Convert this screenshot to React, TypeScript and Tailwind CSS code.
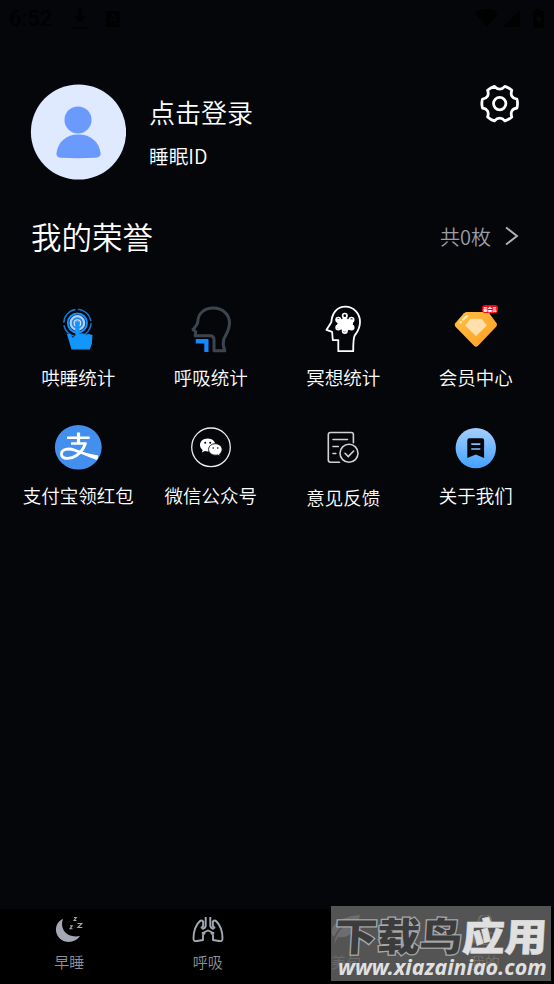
import type { ReactNode } from 'react';

interface MenuItem {
	label: string;
	icon: ReactNode;
	lower?: boolean;
}

function StatusBar() {
	return (
		<div className="flex h-9 items-center justify-between pl-[9px] pr-[9px] pt-[2px] text-[#010102]">
			<div className="flex items-center">
				<span className="w-[43px] font-['Roboto',sans-serif] text-[22px] font-medium leading-9">6:52</span>
				<svg width="16" height="22" viewBox="0 0 16 22" className="ml-[20px]" fill="currentColor">
					<path d="M6 1h4v7h4l-6 6-6-6h4zM1 19h14v2H1z" />
				</svg>
				<svg width="14" height="16" viewBox="0 0 14 16" className="ml-[18px]">
					<path d="M0 0h14v16H0z" fill="currentColor" />
					<path d="M4 11l3-8 3 8M5 9h4M9 13h3" stroke="#07080c" fill="none" />
				</svg>
			</div>
			<svg width="70" height="20" viewBox="0 0 70 20" fill="currentColor">
				<path d="M0 4Q12-4 23 4L12 18zM28 18L45 1v17zM58 2h3V0h5v2h3v17H58z" />
				<path d="M64 5l-3 6h2v4l4-6h-3z" fill="#07080c" />
			</svg>
		</div>
	);
}

function Avatar() {
	return (
		<svg width="96" height="96" viewBox="0 0 96 96">
			<circle cx="48.500" cy="48" r="47.600" fill="#dfe9ff" />
			<circle cx="48" cy="35.900" r="13.500" fill="#6b9aff" />
			<path
				d="M48.300 50.500C36 50.500 28 58 26.500 69c-.4 3 1 4.400 4 4.800Q48.300 74.700 66 73.800c3-.4 5-2 4.600-4.800C69 58 61 50.500 48.300 50.500z"
				fill="#6b9aff"
			/>
		</svg>
	);
}

function GearIcon() {
	return (
		<svg width="40" height="40" viewBox="0 0 40 40" fill="none" stroke="#fff" strokeWidth="2.800" strokeLinejoin="round">
			<path d="M14.500 2.300Q10.500 3.600 7.600 6.300C9.300 11.200 7.300 14.500 2.500 15.200Q1.200 19.500 2.500 24C7.300 24.700 9.300 28 7.600 32.900Q10.500 35.600 14.500 36.900C17.700 33.200 21.700 33.200 24.900 36.900Q28.900 35.600 31.800 32.900C30.100 28 32.100 24.700 36.900 24Q38.200 19.500 36.900 15.200C32.100 14.500 30.100 11.200 31.800 6.300Q28.900 3.600 24.900 2.300C21.700 6 17.700 6 14.500 2.300z" />
			<circle cx="19.700" cy="19.600" r="6.200" />
		</svg>
	);
}

function TouchIcon() {
	return (
		<svg width="48" height="48" viewBox="0 0 48 48" fill="none">
			<circle cx="23.400" cy="18" r="13.600" stroke="#1277cf" strokeWidth="1.400" strokeDasharray="19 2.360" />
			<circle cx="23.400" cy="18" r="9.600" fill="#0a3a6c" stroke="#1890ff" strokeWidth="1.900" />
			<circle cx="23.400" cy="18" r="6.800" fill="#2f83d8" stroke="#a9d2ff" strokeWidth="2.200" />
			<circle cx="23.400" cy="18" r="3.300" fill="#4c9cee" stroke="#d4e8ff" strokeWidth="1.100" />
			<path
				d="M21.300 18.500a2.200 2.200 0 0 1 4.200 0v10.200l3.300-.5 3 1.200 3-.3 3.700.8-.7 9-2 5.600H17.500l-1.600-5.400-3-10.100 3-.2 3 4 2.400-2z"
				fill="#1296fb"
			/>
		</svg>
	);
}

function BreathHeadIcon() {
	return (
		<svg width="48" height="48" viewBox="0 0 48 48" fill="none">
			<path
				d="M8.200 30.700h14.800Q27 30.700 27 35v10.700h10.800Q35.300 40 36.700 34.500C37.700 31 42.500 26 42.500 18 42.500 9 35 3 26.500 3 17 3 11.200 8.500 10.800 16.500 10.600 20 8 22 6 24.500l2.700 2.200z"
				stroke="#3c454f"
				strokeWidth="3"
				strokeLinejoin="round"
			/>
			<path d="M8.800 33.900h11.500q1.200 0 1.200 1.200v12h-4.200v-8.700H8.800z" fill="#1688ff" />
		</svg>
	);
}

function MindIcon() {
	return (
		<svg width="48" height="48" viewBox="0 0 48 48" fill="none" stroke="#fff">
			<g transform="translate(1.300 -.3)">
				<path
					d="M18 46.500V35.500h-5.500l-.7-8.400-5.700-1.900 4.900-7.700C11.700 8.500 16.500 2 25 2c8.400 0 14.700 6.700 14.700 15.300 0 7-2.500 9.500-5.300 13.500-1.200 2-1.500 4-1.500 15.700z"
					strokeWidth="1.800"
					strokeLinejoin="round"
				/>
				<path d="M24.500 13l3.500 2 5 .2-1 4.300 1.500 4.500-5 .8-4 2-3.500-2.500-4.500-1.100 1.200-4.500-1.700-4 5 .3z" fill="#fff" />
				<g strokeWidth="1.700">
					<circle cx="24.500" cy="11" r="2.200" />
					<circle cx="31.200" cy="15" r="2.200" />
					<circle cx="31.200" cy="22.800" r="2.200" />
					<circle cx="24.500" cy="26.300" r="2.200" />
					<circle cx="18" cy="22.800" r="2.200" />
					<circle cx="18" cy="15" r="2.200" />
				</g>
			</g>
		</svg>
	);
}

function DiamondIcon() {
	return (
		<span className="relative block h-12 w-12">
			<svg width="48" height="48" viewBox="0 0 48 48">
				<defs>
					<linearGradient id="gold" x1="0" y1="0" x2="1" y2="1">
						<stop offset="0" stopColor="#ffc044" />
						<stop offset="1" stopColor="#ff9f22" />
					</linearGradient>
				</defs>
				<path
					d="M15 7h19.500q1.500 0 2.700 1.200l7.400 10q1 1.800-.5 3.500L26 40.800q-2 1.800-4 0L3.500 21.700q-1.500-1.700-.3-3.500l8.700-10Q13.500 7 15 7z"
					fill="url(#gold)"
				/>
				<path d="M18.500 13.700h11l5.300 6.800L24 31 13.200 20.500z" fill="#ffe0ad" />
				<path d="M11 14.500l4-3.300M8.400 17.600l.7-.7" stroke="#fff5dc" strokeWidth="2" strokeLinecap="round" />
			</svg>
			<span className="absolute left-[30px] top-0 flex h-[8px] w-[16px] items-center justify-center overflow-hidden rounded-[3px] bg-[#fa0010]">
				<span className="scale-[0.45] whitespace-nowrap text-[10px] font-black leading-none text-white">最会员</span>
			</span>
		</span>
	);
}

function AlipayIcon() {
	return (
		<svg width="48" height="48" viewBox="0 0 48 48" fill="none" stroke="#fff">
			<ellipse cx="24.300" cy="24.300" rx="23.400" ry="22.300" fill="#438fee" stroke="none" />
			<path d="M13 14.700h22.700M17 20.500h15.500" strokeWidth="2.400" />
			<path d="M24.500 9.500v11.500" strokeWidth="3.200" />
			<path
				d="M31.500 20Q29 28 22.500 32.500C17.500 36 8 37 7.500 31.300 7.200 26 14.500 25 20.500 27 27 29.500 33 32.500 44 34.700"
				strokeWidth="2.800"
			/>
			<path d="M29 29.500l15.300 3-1.600 4.500Q35 34.500 28 30.500z" fill="#fff" stroke="none" />
		</svg>
	);
}

function WechatIcon() {
	return (
		<svg width="48" height="48" viewBox="0 0 48 48">
			<circle cx="24" cy="24.300" r="19.300" fill="none" stroke="#eee" strokeWidth="1.300" />
			<path
				d="M20.700 15.500c-4.400 0-7.700 2.800-7.700 6.400 0 2 1 3.700 2.700 5l-.8 2.600 3-1.500q1.400.4 2.800.4c4.300 0 7.700-2.900 7.700-6.500s-3.400-6.400-7.700-6.400z"
				fill="#fff"
			/>
			<path
				d="M28.400 20.700c-3.900 0-6.800 2.500-6.800 5.700s3 5.800 6.800 5.800q1.300 0 2.400-.3l2.500 1.300-.7-2.200c1.600-1 2.500-2.700 2.500-4.600 0-3.200-2.900-5.700-6.700-5.700z"
				fill="#fff"
				stroke="#05060a"
				strokeWidth=".9"
			/>
			<g fill="#05060a">
				<circle cx="18.200" cy="19.800" r="1" />
				<circle cx="23.200" cy="19.800" r="1" />
				<circle cx="26.200" cy="25" r=".8" />
				<circle cx="30.700" cy="25" r=".8" />
			</g>
		</svg>
	);
}

function FeedbackIcon() {
	return (
		<svg width="48" height="48" viewBox="0 0 48 48" fill="none" stroke="#d2d2d2" strokeWidth="1.600" strokeLinecap="round">
			<g transform="translate(0 .5)">
				<path d="M20.500 38.700H11.500q-2.200 0-2.200-2.200V11.200q0-2.200 2.200-2.200h20.700q2.200 0 2.200 2.200v8" />
				<path d="M14 16h14.500M14 23h5.300M14 30h2.800" />
				<circle cx="30" cy="29.800" r="9" />
				<path d="M26 29.800l3.300 3.200 5.300-5.500" />
			</g>
		</svg>
	);
}

function AboutIcon() {
	return (
		<svg width="48" height="48" viewBox="0 0 48 48">
			<defs>
				<linearGradient id="sky" x1="0" y1="0" x2="0" y2="1">
					<stop offset="0" stopColor="#a4d0ff" />
					<stop offset="1" stopColor="#42a0ff" />
				</linearGradient>
			</defs>
			<circle cx="23.800" cy="25.100" r="20.200" fill="url(#sky)" />
			<path d="M17.300 15.300h12.800q2 0 2 2v17.800l-8.300-3.600-8.500 3.600V17.300q0-2 2-2z" fill="#05060a" />
			<path d="M19.800 21.100h8M19.800 26h8" stroke="#82bdff" strokeWidth="1.600" strokeLinecap="round" />
		</svg>
	);
}

function MoonIcon() {
	return (
		<svg width="32" height="30" viewBox="0 0 32 30" fill="none">
			<path d="M10 3.700C4 6.500 1.300 13.300 4 19.500 8 28.500 21 29.800 27 21 20.500 22.300 14 20.800 10.700 15.300 8.700 11.500 8.500 7.500 10 3.700z" fill="#a4a8b5" />
			<path d="M21 2.500h2.300l-2.300 3h2.500M24.500 8.500h4.300l-4 4h4.500M17 10.800h2.200l-2.200 3h2.500" stroke="#a4a8b5" strokeWidth="1.100" />
		</svg>
	);
}

function LungIcon() {
	return (
		<svg width="32" height="30" viewBox="0 0 32 30" fill="none" stroke="#a4a8b5" strokeWidth="1.900" strokeLinejoin="round">
			<path d="M13.700 2v8.500q0 2.500-3.500 3.500M18.300 2v8.500q0 2.500 3.500 3.500" />
			<path d="M11.300 7C10.500 5 9 5 7.500 6.500 3.500 10.500 1.500 17 1.500 23.500q0 3.200 3.500 2.500l6-1v-5.200l1.500-1.500-2-.3L16 15.500l5.500 2.500-2 .3 1.500 1.500V25l6 1q3.500.7 3.500-2.500c0-6.500-2-13-6-17-1.500-1.500-3-1.500-3.800.5" />
			<path d="M11.200 6v3.800q0 2.500-2.400 3.200M20.800 6v3.800q0 2.500 2.400 3.200" />
		</svg>
	);
}

function FeatherIcon() {
	return (
		<svg width="32" height="30" viewBox="0 0 32 30" fill="#a4a8b5">
			<path d="M30 0C18 1 5 5 2 14q-1 5 2 8Q8 12 19 7 9 14 5 24l-1 5 4-7c8 1 13-2 15-7l-3-1c5-1 8-6 10-14z" />
		</svg>
	);
}

function MineIcon() {
	return (
		<svg width="32" height="30" viewBox="0 0 32 30" fill="none" stroke="#e5bb62" strokeWidth="1.600">
			<circle cx="16" cy="6" r="6.500" />
			<path d="M9 18h14M8 18q-3 3-3 9 11 6 22 0 0-6-3-9M5 25h22" />
		</svg>
	);
}

const menuItems: MenuItem[] = [
	{ label: '哄睡统计', icon: <TouchIcon /> },
	{ label: '呼吸统计', icon: <BreathHeadIcon /> },
	{ label: '冥想统计', icon: <MindIcon /> },
	{ label: '会员中心', icon: <DiamondIcon /> },
	{ label: '支付宝领红包', icon: <AlipayIcon /> },
	{ label: '微信公众号', icon: <WechatIcon /> },
	{ label: '意见反馈', icon: <FeedbackIcon />, lower: true },
	{ label: '关于我们', icon: <AboutIcon /> },
];

const tabs = [
	{ label: '早睡', icon: <MoonIcon /> },
	{ label: '呼吸', icon: <LungIcon /> },
	{ label: '美句', icon: <FeatherIcon /> },
	{ label: '我的', icon: <MineIcon />, active: true },
];

function Watermark() {
	return (
		<div className="absolute bottom-[3px] right-[3px] h-[75px] w-[220px] overflow-hidden bg-[#636363]/85">
			<div className="absolute left-[4px] top-[8px] flex origin-left scale-x-[1.090] -skew-x-3 whitespace-nowrap font-['Noto_Sans_CJK_SC',sans-serif] text-[39px] font-black leading-[40px]">
				<span className="text-[#3c3c3c] [-webkit-text-stroke:2.500px_#a8a8a8] [paint-order:stroke_fill]">下载鸟</span>
				<span className="text-[#e0e0e0] [-webkit-text-stroke:0.500px_#e0e0e0]">应用</span>
			</div>
			<div className="absolute left-[7px] top-[49px] origin-left scale-x-[1.045] whitespace-nowrap font-['Noto_Sans',sans-serif] text-[20.500px] font-bold italic leading-[24px] text-[#e0e0e0]">
				www.xiazainiao.com
			</div>
		</div>
	);
}

export default function App() {
	return (
		<div className="relative flex h-[984px] w-[554px] flex-col overflow-hidden bg-[#05060a] font-['Noto_Sans_CJK_SC',sans-serif] font-[350] text-white">
			<StatusBar />

			{/* Profile */}
			<header className="mt-12 flex h-24 pl-[30px] pr-[34px]">
				<Avatar />
				<div className="ml-[23px] flex flex-1 flex-col">
					<h1 className="mt-[9px] text-[26px] leading-[38px]">点击登录</h1>
					<p className="mt-[11px] text-[19.700px] leading-[28px]">睡眠ID</p>
				</div>
				<button className="h-10 w-10">
					<GearIcon />
				</button>
			</header>

			{/* Honors */}
			<section className="mt-8 flex h-12 items-center justify-between pl-[31px] pr-[35px]">
				<h2 className="text-[30.500px] leading-[48px]">我的荣誉</h2>
				<div className="flex items-center text-[#9a9da8]">
					<span className="pt-px text-[20px] leading-[48px]">共0枚</span>
					<svg width="14" height="20" viewBox="0 0 14 20" className="ml-[14px]" fill="none" stroke="#b4b4b4" strokeWidth="1.900">
						<path d="M1 1.500l11 8.500-11 8.500" />
					</svg>
				</div>
			</section>

			{/* Menu */}
			<main className="mt-[45px] grid grid-cols-4 px-3">
				{menuItems.map((item) => (
					<button key={item.label} className="flex h-[118px] flex-col items-center">
						{item.icon}
						<span className={item.lower ? 'mt-[14px] text-[18.500px] leading-[24px]' : 'mt-[12px] text-[18.500px] leading-[24px]'}>
							{item.label}
						</span>
					</button>
				))}
			</main>

			{/* Tab bar */}
			<nav className="mt-auto grid h-[75px] grid-cols-4 bg-black pt-[6px]">
				{tabs.map((tab) => (
					<button key={tab.label} className={tab.active ? 'flex flex-col items-center text-[#e5bb62]' : 'flex flex-col items-center text-[#8d909b]'}>
						{tab.icon}
						<span className="mt-[6px] text-[15px] leading-[22px]">{tab.label}</span>
					</button>
				))}
			</nav>
			<Watermark />
		</div>
	);
}
